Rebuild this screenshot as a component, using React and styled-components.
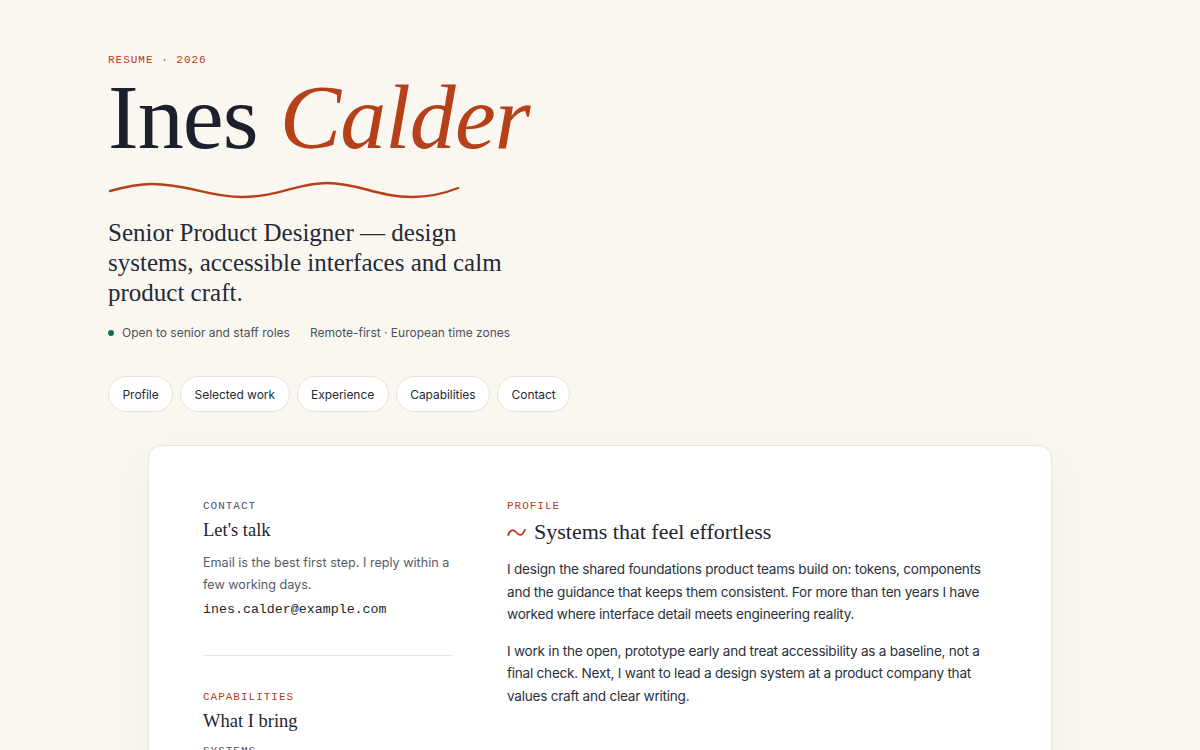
import styled, { createGlobalStyle } from "styled-components";

const GlobalStyle = createGlobalStyle`
  * { box-sizing: border-box; }
  body {
    margin: 0;
    background: #faf7f1;
    color: #1d2330;
    font-family: "Inter", "Liberation Sans", sans-serif;
  }
`;

const SERIF = `"Liberation Serif", "DejaVu Serif", serif`;
const MONO = `"Liberation Mono", "DejaVu Sans Mono", monospace`;
const ACCENT = "#b5401a";

const Page = styled.div`
  width: 984px;
  margin: 0 auto;
  padding: 52px 0 80px;
`;

const Header = styled.header`
  display: flex;
  flex-direction: column;
  align-items: flex-start;
`;

const Eyebrow = styled.div`
  font-family: ${MONO};
  font-size: 11px;
  line-height: 16px;
  letter-spacing: 0.09em;
  text-transform: uppercase;
  color: ${(p) => (p.$muted ? "#4d5462" : ACCENT)};
`;

const Name = styled.h1`
  margin: 3px 0 0;
  font-family: ${SERIF};
  font-weight: 400;
  font-size: 92px;
  line-height: 1;
  letter-spacing: -0.01em;
  color: #1b202c;

  em {
    color: ${ACCENT};
    font-style: italic;
  }
`;

const Wave = styled.svg`
  display: block;
  margin-top: 15px;
`;

const Lede = styled.p`
  margin: 18px 0 0;
  max-width: 440px;
  font-family: ${SERIF};
  font-size: 25px;
  line-height: 30px;
  color: #242a36;
`;

const Meta = styled.div`
  display: flex;
  align-items: center;
  gap: 20px;
  margin-top: 15px;
  font-size: 12px;
  line-height: 20px;
  color: #4b5260;
`;

const Status = styled.span`
  display: inline-flex;
  align-items: center;
  gap: 8px;

  &::before {
    content: "";
    width: 6px;
    height: 6px;
    border-radius: 50%;
    background: #0f6b5f;
  }
`;

const Nav = styled.nav`
  display: flex;
  gap: 7px;
  margin-top: 33px;
`;

const Chip = styled.a`
  display: inline-flex;
  align-items: center;
  height: 36px;
  padding: 0 13.5px;
  border: 1px solid #e8e1d5;
  border-radius: 18px;
  background: #ffffff;
  font-size: 12px;
  letter-spacing: -0.05px;
  color: #252a35;
  text-decoration: none;
`;

const Card = styled.main`
  margin: 33px 40px 0;
  padding: 52px 54px 60px;
  background: #ffffff;
  border: 1px solid #ebe5da;
  border-radius: 14px;
  box-shadow: 0 18px 50px rgba(70, 50, 20, 0.06);
  display: grid;
  grid-template-columns: 250px 1fr;
  column-gap: 54px;
`;

const Side = styled.aside`
  display: flex;
  flex-direction: column;
`;

const Section = styled.section`
  display: flex;
  flex-direction: column;
`;

const Heading = styled.h2`
  display: flex;
  align-items: center;
  gap: 8px;
  margin: ${(p) => (p.$large ? "4px 0 12px" : "3px 0 9px")};
  font-family: ${SERIF};
  font-weight: 400;
  font-size: ${(p) => (p.$large ? "22px" : "18.5px")};
  line-height: ${(p) => (p.$large ? "28px" : "26px")};
  color: #1f2431;
`;

const Note = styled.p`
  margin: 0;
  font-size: 12.6px;
  line-height: 22px;
  color: #555c69;
`;

const Email = styled.a`
  margin-top: 4px;
  font-family: ${MONO};
  font-size: 13.3px;
  line-height: 20px;
  color: #1f2431;
  text-decoration: none;
`;

const Divider = styled.hr`
  width: 100%;
  margin: 35px 0 33px;
  border: 0;
  border-top: 1px solid #ece5da;
`;

const SkillGroup = styled.div`
  margin-top: 14px;
  display: flex;
  flex-direction: column;
  gap: 4px;
`;

const Skill = styled.span`
  font-size: 12.6px;
  line-height: 22px;
  color: #3d4451;
`;

const Body = styled.p`
  margin: 0 0 13.5px;
  font-size: 13.6px;
  letter-spacing: -0.25px;
  line-height: 22.7px;
  color: #2a303c;
`;

function Tilde() {
  return (
    <svg width="19" height="11" viewBox="0 0 19 11" aria-hidden="true">
      <path
        d="M1.2 8 C3 2.5, 6.5 2, 9.5 5.5 S15.5 9, 17.8 3"
        fill="none"
        stroke={ACCENT}
        strokeWidth="1.9"
        strokeLinecap="round"
      />
    </svg>
  );
}

const links = ["Profile", "Selected work", "Experience", "Capabilities", "Contact"];

export default function App() {
  return (
    <>
      <GlobalStyle />
      <Page>
        <Header>
          <Eyebrow>Resume · 2026</Eyebrow>
          <Name>
            Ines <em>Calder</em>
          </Name>
          <Wave width="352" height="22" viewBox="0 0 352 22" aria-hidden="true">
            <path
              d="M2 13 C20 8, 30 6, 44 6 C80 6, 100 19, 134 19 C170 19, 190 5, 219 5 C250 5, 270 19, 304 19 C325 19, 340 14, 350 10"
              fill="none"
              stroke={ACCENT}
              strokeWidth="2.4"
              strokeLinecap="round"
            />
          </Wave>
          <Lede>
            Senior Product Designer — design systems, accessible interfaces and calm
            product craft.
          </Lede>
          <Meta>
            <Status>Open to senior and staff roles</Status>
            <span>Remote-first · European time zones</span>
          </Meta>
          <Nav>
            {links.map((l) => (
              <Chip key={l} href={`#${l.toLowerCase().replace(" ", "-")}`}>
                {l}
              </Chip>
            ))}
          </Nav>
        </Header>

        <Card>
          <Side>
            <Section>
              <Eyebrow $muted>Contact</Eyebrow>
              <Heading>Let's talk</Heading>
              <Note>Email is the best first step. I reply within a few working days.</Note>
              <Email href="mailto:ines.calder@example.com">ines.calder@example.com</Email>
            </Section>
            <Divider />
            <Section>
              <Eyebrow>Capabilities</Eyebrow>
              <Heading>What I bring</Heading>
              <Eyebrow $muted>Systems</Eyebrow>
              <SkillGroup>
                <Skill>Design tokens and theming</Skill>
                <Skill>Component libraries</Skill>
                <Skill>Documentation and governance</Skill>
              </SkillGroup>
            </Section>
          </Side>

          <Section>
            <Eyebrow>Profile</Eyebrow>
            <Heading $large>
              <Tilde />
              Systems that feel effortless
            </Heading>
            <Body>
              I design the shared foundations product teams build on: tokens, components
              and the guidance that keeps them consistent. For more than ten years I have
              worked where interface detail meets engineering reality.
            </Body>
            <Body>
              I work in the open, prototype early and treat accessibility as a baseline, not
              a final check. Next, I want to lead a design system at a product company that
              values craft and clear writing.
            </Body>
          </Section>
        </Card>
      </Page>
    </>
  );
}
